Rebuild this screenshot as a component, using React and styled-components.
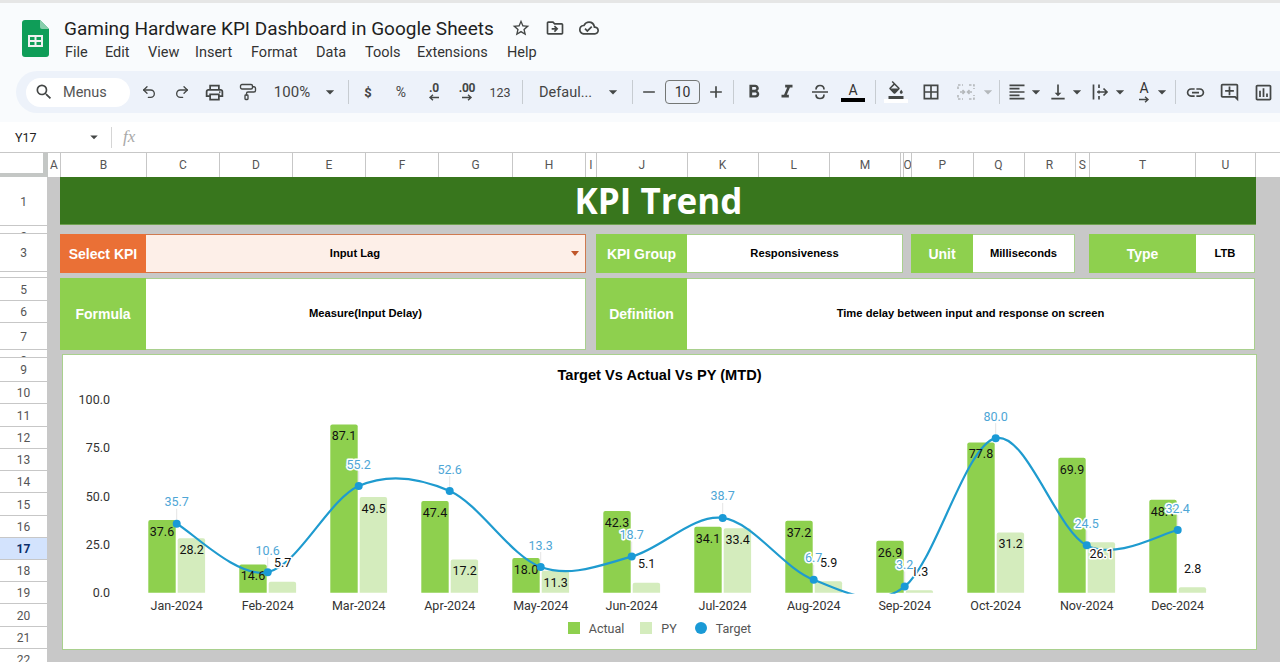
import styled, { createGlobalStyle } from 'styled-components';
import { Undo2, Redo2, PaintRoller } from 'lucide-react';
import {
  MdSearch, MdOutlinePrint, MdArrowDropDown, MdRemove, MdAdd,
  MdFormatBold, MdFormatItalic, MdOutlineFormatColorFill, MdBorderAll, MdFormatAlignLeft,
  MdVerticalAlignBottom, MdLink, MdOutlineAddComment, MdOutlineInsertChart, MdStarBorder,
  MdOutlineDriveFileMove, MdOutlineCloudDone,
} from 'react-icons/md';

const GlobalStyle = createGlobalStyle`
  * { box-sizing: border-box; }
  html, body { margin: 0; padding: 0; height: 662px; overflow: hidden; background: #fff; }
  body { font-family: Roboto, "Liberation Sans", sans-serif; }
`;

const Page = styled.div`
  width: 1280px;
  height: 662px;
  overflow: hidden;
  display: flex;
  flex-direction: column;
`;

const Chrome = styled.header`
  background: #f9fbfd;
  border-top: 3px solid #e6e6e6;
  height: 122px;
  flex: none;
`;

const AppHeader = styled.div`
  height: 68px;
  display: flex;
  align-items: flex-start;
  padding: 17px 0 0 22px;
`;

const TitleBlock = styled.div`
  margin-left: 15px;
  margin-top: -6px;
`;

const TitleRow = styled.div`
  display: flex;
  align-items: center;
  height: 28px;
  color: #444746;
`;

const DocTitle = styled.h1`
  margin: 0 10px 0 0;
  font-size: 19px;
  font-weight: 400;
  color: #1f1f1f;
  width: 430px;
  white-space: nowrap;
`;

const TitleIcon = styled.span`
  display: flex;
  justify-content: center;
  width: 34px;
  font-size: 20px;
`;

const MenuBar = styled.nav`
  display: flex;
  height: 24px;
  align-items: center;
  margin-top: -2px;
`;

const MenuItem = styled.span`
  font-size: 14.5px;
  color: #333;
  width: ${p => p.$w}px;
  padding-left: 1px;
`;

const Toolbar = styled.div`
  height: 42px;
  margin-left: 16px;
  padding-left: 10px;
  display: flex;
  align-items: center;
  background: #edf2fa;
  border-radius: 21px 0 0 21px;
  overflow: hidden;
  color: #444746;
`;

const SearchPill = styled.div`
  width: 104px;
  height: 29px;
  flex: none;
  margin-right: 2px;
  border-radius: 15px;
  background: #fff;
  display: flex;
  align-items: center;
  padding-left: 8px;
  gap: 9px;
  font-size: 14.5px;
  color: #555;
`;

const Tool = styled.span`
  width: ${p => p.$w || 33}px;
  margin-left: ${p => p.$ml || 0}px;
  height: 28px;
  flex: none;
  display: flex;
  align-items: center;
  justify-content: center;
  font-size: ${p => p.$size || 20}px;
  color: ${p => p.$muted ? '#b4b8bb' : '#444746'};
  svg { flex: none; }
`;

const ToolText = styled(Tool)`
  font-size: ${p => p.$size || 14}px;
  color: #444;
`;

const BoldText = styled(ToolText)`
  font-weight: 700;
`;

const FontName = styled(ToolText)`
  justify-content: flex-start;
  padding-left: 9px;
  font-size: 14.5px;
`;

const Sep = styled.i`
  width: 1px;
  height: 24px;
  flex: none;
  background: #c7ccd1;
  margin-left: ${p => p.$ml || 0}px;
  margin-right: ${p => p.$mr || 0}px;
`;

const SizeBox = styled.span`
  width: 35px;
  height: 24px;
  flex: none;
  border: 1px solid #747775;
  border-radius: 4px;
  display: flex;
  align-items: center;
  justify-content: center;
  font-size: 14px;
  color: #333;
`;

const StackTool = styled(Tool)`
  flex-direction: column;
  line-height: 1;
`;

const ColorA = styled.span`
  font-size: 14px;
  line-height: 15px;
  color: #333;
`;

const ColorBar = styled.span`
  width: ${p => p.$w || 24}px;
  height: 4px;
  background: ${p => p.$color};
`;

const DecimalMark = styled.span`
  font-size: 12px;
  font-weight: 700;
  line-height: 11px;
  letter-spacing: -0.3px;
`;

const FormulaBar = styled.div`
  height: 30px;
  flex: none;
  background: #fff;
  display: flex;
  align-items: center;
  padding-left: 15px;
`;

const CellName = styled.span`
  width: 70px;
  font-size: 12.5px;
  color: #222;
`;

const FormulaDivider = styled.i`
  width: 1px;
  height: 21px;
  background: #d5d5d5;
  margin: 0 11px 0 8px;
`;

const Fx = styled.span`
  font-family: "Liberation Serif", serif;
  font-style: italic;
  font-size: 17px;
  color: #a8a8a8;
`;

const ColumnBar = styled.div`
  height: 25px;
  flex: none;
  display: flex;
  background: #fff;
  border-top: 1px solid #c7c7c7;
`;

const Corner = styled.div`
  width: 48px;
  border-right: 5px solid #c4c7c5;
  border-bottom: 4px solid #c4c7c5;
`;

const ColumnCell = styled.div`
  width: ${p => p.$w}px;
  flex: none;
  overflow: hidden;
  border-right: 1px solid #c7c7c7;
  display: flex;
  align-items: center;
  justify-content: center;
  font-size: 12px;
  color: #555;
`;

const SheetBody = styled.div`
  flex: 1;
  min-height: 0;
  display: flex;
`;

const RowHeaders = styled.div`
  width: 47px;
  flex: none;
  background: #fff;
  overflow: hidden;
`;

const RowCell = styled.div`
  height: ${p => p.$h}px;
  border-bottom: 1px solid #c7c7c7;
  overflow: hidden;
  display: flex;
  justify-content: center;
  align-items: ${p => p.$h < 10 ? 'flex-start' : 'center'};
  padding-top: ${p => p.$h < 10 ? '4px' : '1px'};
  font-size: 12px;
  line-height: 14px;
  font-weight: ${p => p.$active ? 700 : 400};
  color: ${p => p.$active ? '#0b2f6b' : '#555'};
  background: ${p => p.$active ? '#d3e3fd' : '#fff'};
`;

const Main = styled.main`
  flex: 1;
  min-width: 0;
  background: #c8c8c8;
  padding: 0 24px 0 13px;
`;

const Banner = styled.div`
  height: 48px;
  background: #38761d;
  border-bottom: 1px solid #6fa050;
  display: flex;
  align-items: center;
  justify-content: center;
  color: #fff;
  font-size: 35px;
  font-weight: 700;
  font-family: "Open Sans", sans-serif;
  padding-left: 1px;
`;

const InfoRow = styled.div`
  display: flex;
  height: ${p => p.$h}px;
  margin-top: ${p => p.$mt}px;
`;

const Field = styled.div`
  display: flex;
  flex: none;
  width: ${p => p.$w}px;
  margin-left: ${p => p.$ml || 0}px;
  border: 1px solid ${p => p.$orange ? '#cf7a50' : '#a9d08e'};
  border-left: 0;
`;

const FieldLabel = styled.div`
  width: ${p => p.$w}px;
  flex: none;
  margin: -1px 0;
  background: ${p => p.$orange ? '#ea7036' : '#8ed04e'};
  color: #fff;
  font-family: "Liberation Sans", sans-serif;
  font-size: 14px;
  font-weight: 700;
  display: flex;
  align-items: center;
  justify-content: center;
`;

const FieldValue = styled.div`
  flex: 1;
  position: relative;
  background: ${p => p.$orange ? '#fdefe8' : '#fff'};
  color: #000;
  font-family: "Liberation Sans", sans-serif;
  font-size: 11.2px;
  font-weight: 700;
  display: flex;
  align-items: center;
  justify-content: center;
  padding-right: ${p => p.$pad || 0}px;
  padding-bottom: 2px;
`;

const DropCaret = styled.i`
  position: absolute;
  right: 6px;
  top: 16px;
  border-left: 4px solid transparent;
  border-right: 4px solid transparent;
  border-top: 5px solid #c0562a;
`;

const ChartCard = styled.section`
  height: 296px;
  margin: 4px -1px 0 2px;
  background: #fff;
  border: 1px solid #a9d08e;
  display: flex;
  flex-direction: column;
`;

const ChartTitle = styled.h2`
  margin: 0;
  height: 35px;
  padding-top: 6px;
  text-align: center;
  font-family: "Liberation Sans", sans-serif;
  font-size: 14.6px;
  line-height: 29px;
  font-weight: 700;
  color: #000;
`;

const ChartSvg = styled.svg`
  display: block;
  width: 1193px;
  height: 225px;
  flex: none;
`;

const Legend = styled.div`
  height: 26px;
  display: flex;
  align-items: center;
  justify-content: center;
  font-size: 12.5px;
  color: #555;
`;

const LegendItem = styled.span`
  display: flex;
  align-items: center;
  gap: 9px;
  margin-right: ${p => p.$mr || 0}px;
`;

const LegendSwatch = styled.i`
  width: 12px;
  height: 12px;
  background: ${p => p.$color};
  border-radius: ${p => p.$round ? '50%' : '0'};
`;

const AxisText = styled.text`
  font-family: Roboto, sans-serif;
  font-size: 12.5px;
  fill: #333;
`;

const DataLabel = styled.text`
  font-family: Roboto, sans-serif;
  font-size: 12.5px;
  text-anchor: middle;
  fill: ${p => p.$color || '#111'};
  paint-order: stroke;
  stroke: ${p => p.$halo ? '#fff' : 'none'};
  stroke-width: ${p => p.$halo ? 3 : 0}px;
  stroke-linejoin: round;
`;

const months = ['Jan', 'Feb', 'Mar', 'Apr', 'May', 'Jun', 'Jul', 'Aug', 'Sep', 'Oct', 'Nov', 'Dec'];
const actual = [37.6, 14.6, 87.1, 47.4, 18.0, 42.3, 34.1, 37.2, 26.9, 77.8, 69.9, 48.1];
const py = [28.2, 5.7, 49.5, 17.2, 11.3, 5.1, 33.4, 5.9, 1.3, 31.2, 26.1, 2.8];
const target = [35.7, 10.6, 55.2, 52.6, 13.3, 18.7, 38.7, 6.7, 3.2, 80.0, 24.5, 32.4];

const ZERO = 592.7;
const yOf = v => ZERO - v * 1.932;
const xOf = i => 176.7 + i * 91;

const barPath = (x, w, v) => {
  const top = yOf(v);
  return `M${x} ${ZERO}V${top + 2}Q${x} ${top} ${x + 2} ${top}H${x + w - 2}Q${x + w} ${top} ${x + w} ${top + 2}V${ZERO}Z`;
};

// catmull-rom through the target points, same overshoot as the sheet chart
const targetPath = () => {
  const pts = target.map((v, i) => [xOf(i), yOf(v)]);
  let d = `M${pts[0][0]} ${pts[0][1]}`;
  for (let i = 0; i < pts.length - 1; i++) {
    const p0 = pts[i - 1] || pts[i];
    const p1 = pts[i];
    const p2 = pts[i + 1];
    const p3 = pts[i + 2] || p2;
    const c1 = [p1[0] + (p2[0] - p0[0]) / 6, p1[1] + (p2[1] - p0[1]) / 6];
    const c2 = [p2[0] - (p3[0] - p1[0]) / 6, p2[1] - (p3[1] - p1[1]) / 6];
    d += `C${c1[0]} ${c1[1]} ${c2[0]} ${c2[1]} ${p2[0]} ${p2[1]}`;
  }
  return d;
};

function Chart() {
  return (
    <ChartSvg viewBox="63 390 1193 225">
      <defs>
        <clipPath id="plot">
          <rect x="63" y="390" width="1193" height={ZERO - 390 + 1} />
        </clipPath>
      </defs>
      {[0, 25, 50, 75, 100].map(v => (
        <AxisText key={v} x="110" y={yOf(v) + 4.5} textAnchor="end">{v.toFixed(1)}</AxisText>
      ))}
      {months.map((m, i) => (
        <g key={m}>
          <path d={barPath(xOf(i) - 28.4, 27.4, actual[i])} fill="#8ed04e" />
          <path d={barPath(xOf(i) + 1, 27.4, py[i])} fill="#d4ecbd" />
          <line x1={xOf(i)} x2={xOf(i)} y1={yOf(target[i]) - 4} y2={yOf(target[i]) - 15} stroke="#e4e4e4" />
          <AxisText x={xOf(i)} y="610" textAnchor="middle">{m}-2024</AxisText>
        </g>
      ))}
      <path d={targetPath()} fill="none" stroke="#1f9bcf" strokeWidth="2.2" clipPath="url(#plot)" />
      {months.map((m, i) => {
        const small = py[i] < 8;
        return (
          <g key={m}>
            <DataLabel x={xOf(i) - 14.7} y={yOf(actual[i]) + 16}>
              {actual[i].toFixed(1)}
            </DataLabel>
            <DataLabel x={xOf(i) + 15} y={small ? yOf(py[i]) - 14.5 : yOf(py[i]) + 16} $halo={small || m === 'Nov'}>
              {py[i].toFixed(1)}
            </DataLabel>
          </g>
        );
      })}
      {months.map((m, i) => (
        <g key={m}>
          <DataLabel x={xOf(i)} y={yOf(target[i]) - 17.5} $color="#4ea6d6" $halo>{target[i].toFixed(1)}</DataLabel>
          <circle cx={xOf(i)} cy={yOf(target[i])} r="4" fill="#1a9ad6" />
        </g>
      ))}
    </ChartSvg>
  );
}

const SheetsLogo = () => (
  <svg width="27" height="37" viewBox="0 0 27 37">
    <path d="M3 0H18L27 9V34a3 3 0 0 1-3 3H3a3 3 0 0 1-3-3V3a3 3 0 0 1 3-3Z" fill="#0f9d58" />
    <path d="M18 0L27 9H20a2 2 0 0 1-2-2Z" fill="#87ceac" />
    <path d="M6 15H21V27H6ZM8 17V20H12.5V17ZM14.5 17V20H19V17ZM8 22V25H12.5V22ZM14.5 22V25H19V22Z" fill="#f1f1f1" fillRule="evenodd" />
  </svg>
);

const MiniArrow = ({ left }) => (
  <svg width="12" height="7" viewBox="0 0 12 7">
    <path d={left ? 'M11 3.5H2M5 .8 2 3.5 5 6.2' : 'M1 3.5H10M7 .8 10 3.5 7 6.2'} fill="none" stroke="#444746" strokeWidth="1.4" />
  </svg>
);

const StrikeIcon = () => (
  <svg width="18" height="18" viewBox="0 0 18 18" fill="none" stroke="#444746" strokeWidth="1.7">
    <path d="M1 9H17M5 6.5C5 4 6.8 2.5 9 2.5S13 4 13 6.5M5 11.5C5 14 6.8 15.5 9 15.5S13 14 13 11.5" />
  </svg>
);

const MergeIcon = () => (
  <svg width="18" height="18" viewBox="0 0 18 18" fill="none" stroke="#b4b8bb" strokeWidth="1.6">
    <path d="M1 6V2H6M12 2H17V6M1 12V16H6M12 16H17V12" strokeDasharray="2.5 1.5" />
    <path d="M3 9H7M5.5 7 7.5 9 5.5 11M15 9H11M12.5 7 10.5 9 12.5 11" />
  </svg>
);

const WrapIcon = () => (
  <svg width="18" height="18" viewBox="0 0 18 18" fill="none" stroke="#444746" strokeWidth="1.7">
    <path d="M2.5 1.5V16.5M8 1.5V5M8 7.5V10.5M8 13V16.5M6 9H16M12.5 5.5 16 9 12.5 12.5" />
  </svg>
);

const columns = [
  ['A', 13], ['B', 86], ['C', 73], ['D', 73], ['E', 73], ['F', 73], ['G', 74], ['H', 73], ['I', 11],
  ['J', 90.5], ['K', 71], ['L', 71.5], ['M', 71], ['', 3], ['O', 8], ['P', 61.5], ['Q', 51], ['R', 51],
  ['S', 14.5], ['T', 106], ['U', 60],
];

const rows = [
  [1, 49], [2, 8], [3, 38], [4, 6], [5, 23], [6, 22], [7, 27], [8, 8], [9, 24],
  [10, 22], [11, 23], [12, 22], [13, 22], [14, 22], [15, 23], [16, 22], [17, 22], [18, 22], [19, 22],
  [20, 23], [21, 22], [22, 22],
];

const menus = [['File', 40], ['Edit', 43], ['View', 47], ['Insert', 56], ['Format', 65], ['Data', 49], ['Tools', 52], ['Extensions', 90], ['Help', 40]];

export default function App() {
  return (
    <Page>
      <GlobalStyle />
      <Chrome>
        <AppHeader>
          <SheetsLogo />
          <TitleBlock>
            <TitleRow>
              <DocTitle>Gaming Hardware KPI Dashboard in Google Sheets</DocTitle>
              <TitleIcon><MdStarBorder /></TitleIcon>
              <TitleIcon><MdOutlineDriveFileMove /></TitleIcon>
              <TitleIcon><MdOutlineCloudDone /></TitleIcon>
            </TitleRow>
            <MenuBar>
              {menus.map(([m, w]) => <MenuItem key={m} $w={w}>{m}</MenuItem>)}
            </MenuBar>
          </TitleBlock>
        </AppHeader>
        <Toolbar>
          <SearchPill><MdSearch size={20} color="#444746" />Menus</SearchPill>
          <Tool><Undo2 size={16} strokeWidth={2} /></Tool>
          <Tool><Redo2 size={16} strokeWidth={2} /></Tool>
          <Tool $size={21}><MdOutlinePrint /></Tool>
          <Tool><PaintRoller size={18} strokeWidth={1.8} /></Tool>
          <ToolText $w={56} $size={15}>100%</ToolText>
          <Tool $w={19}><MdArrowDropDown /></Tool>
          <Sep $ml={9} $mr={2.5} />
          <BoldText $size={13}>$</BoldText>
          <ToolText>%</ToolText>
          <StackTool><DecimalMark>.0</DecimalMark><MiniArrow left /></StackTool>
          <StackTool><DecimalMark>.00</DecimalMark><MiniArrow /></StackTool>
          <ToolText $size={12.5}>123</ToolText>
          <Sep $ml={5.5} $mr={7} />
          <FontName $w={73}>Defaul...</FontName>
          <Tool $w={19}><MdArrowDropDown /></Tool>
          <Sep $ml={10} />
          <Tool $w={32}><MdRemove /></Tool>
          <SizeBox>10</SizeBox>
          <Tool $w={32}><MdAdd /></Tool>
          <Sep $ml={1} $mr={3.5} />
          <Tool $size={22}><MdFormatBold /></Tool>
          <Tool $size={22}><MdFormatItalic /></Tool>
          <Tool><StrikeIcon /></Tool>
          <StackTool><ColorA>A</ColorA><ColorBar $color="#000" /></StackTool>
          <Sep $ml={5.5} $mr={3.5} />
          <StackTool><MdOutlineFormatColorFill size={18} /><ColorBar $color="#fff" /></StackTool>
          <Tool $w={37}><MdBorderAll /></Tool>
          <Tool $muted><MergeIcon /></Tool>
          <Tool $w={10} $muted><MdArrowDropDown /></Tool>
          <Sep $ml={6.5} $mr={6} />
          <Tool $w={22}><MdFormatAlignLeft /></Tool>
          <Tool $w={16}><MdArrowDropDown /></Tool>
          <Tool $w={28}><MdVerticalAlignBottom /></Tool>
          <Tool $w={10}><MdArrowDropDown /></Tool>
          <Tool $w={28} $ml={4}><WrapIcon /></Tool>
          <Tool $w={12}><MdArrowDropDown /></Tool>
          <StackTool $w={24} $ml={6}><ColorA>A</ColorA><MiniArrow /></StackTool>
          <Tool $w={12}><MdArrowDropDown /></Tool>
          <Sep $ml={7} />
          <Tool $w={38} $size={21}><MdLink /></Tool>
          <Tool $w={30} $size={21}><MdOutlineAddComment /></Tool>
          <Tool $w={38} $size={21}><MdOutlineInsertChart /></Tool>
        </Toolbar>
      </Chrome>
      <FormulaBar>
        <CellName>Y17</CellName>
        <MdArrowDropDown size={18} color="#444746" />
        <FormulaDivider />
        <Fx>fx</Fx>
      </FormulaBar>
      <ColumnBar>
        <Corner />
        {columns.map(([c, w], i) => <ColumnCell key={i} $w={w}>{c}</ColumnCell>)}
      </ColumnBar>
      <SheetBody>
        <RowHeaders>
          {rows.map(([n, h]) => <RowCell key={n} $h={h} $active={n === 17}>{n}</RowCell>)}
        </RowHeaders>
        <Main>
          <Banner>KPI Trend</Banner>
          <InfoRow $h={39} $mt={9}>
            <Field $w={526} $orange>
              <FieldLabel $w={86} $orange>Select KPI</FieldLabel>
              <FieldValue $orange $pad={21}>Input Lag<DropCaret /></FieldValue>
            </Field>
            <Field $w={307} $ml={10}>
              <FieldLabel $w={91}>KPI Group</FieldLabel>
              <FieldValue>Responsiveness</FieldValue>
            </Field>
            <Field $w={164} $ml={8}>
              <FieldLabel $w={62}>Unit</FieldLabel>
              <FieldValue>Milliseconds</FieldValue>
            </Field>
            <Field $w={166} $ml={14}>
              <FieldLabel $w={107}>Type</FieldLabel>
              <FieldValue>LTB</FieldValue>
            </Field>
          </InfoRow>
          <InfoRow $h={72} $mt={5}>
            <Field $w={526}>
              <FieldLabel $w={86}>Formula</FieldLabel>
              <FieldValue>Measure(Input Delay)</FieldValue>
            </Field>
            <Field $w={659} $ml={10}>
              <FieldLabel $w={91}>Definition</FieldLabel>
              <FieldValue>Time delay between input and response on screen</FieldValue>
            </Field>
          </InfoRow>
          <ChartCard>
            <ChartTitle>Target Vs Actual Vs PY (MTD)</ChartTitle>
            <Chart />
            <Legend>
              <LegendItem $mr={16}><LegendSwatch $color="#8ed04e" />Actual</LegendItem>
              <LegendItem $mr={18}><LegendSwatch $color="#d4ecbd" />PY</LegendItem>
              <LegendItem><LegendSwatch $color="#1a9ad6" $round />Target</LegendItem>
            </Legend>
          </ChartCard>
        </Main>
      </SheetBody>
    </Page>
  );
}
